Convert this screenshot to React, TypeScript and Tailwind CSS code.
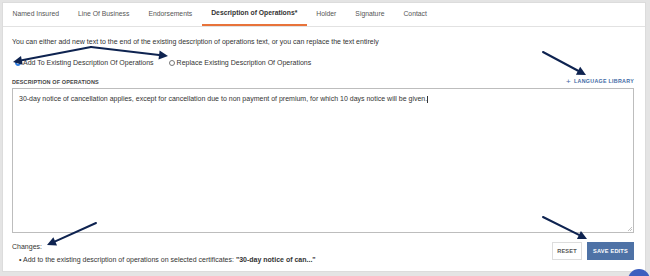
import React from "react";

const tabs = [
  "Named Insured",
  "Line Of Business",
  "Endorsements",
  "Description of Operations*",
  "Holder",
  "Signature",
  "Contact",
];

function Arrow({ x1, y1, x2, y2 }: { x1: number; y1: number; x2: number; y2: number }) {
  const a = Math.atan2(y2 - y1, x2 - x1);
  const len = 9;
  const w = 4.5;
  const bx = x2 - len * Math.cos(a);
  const by = y2 - len * Math.sin(a);
  const px = -Math.sin(a) * w;
  const py = Math.cos(a) * w;
  return (
    <g>
      <line x1={x1} y1={y1} x2={bx} y2={by} stroke="#0e2350" strokeWidth={2} strokeLinecap="round" />
      <polygon points={`${x2},${y2} ${bx + px},${by + py} ${bx - px},${by - py}`} fill="#0e2350" />
    </g>
  );
}

export default function App() {
  return (
    <div
      className="relative w-[650px] h-[276px] overflow-hidden bg-[#e4e4e4] pt-[2px] pl-[2px]"
      style={{ fontFamily: '"Liberation Sans", Arial, sans-serif' }}
    >
      <div className="w-[644px] h-[270px] bg-white border border-[#dcdcdc] text-[#333]">
        <div className="flex h-[24px] border-b border-[#e2e2e2] text-[6.8px] text-[#555]">
          {tabs.map((t, i) => (
            <div
              key={t}
              className={
                "flex items-center px-[9.5px] " +
                (i === 3
                  ? "font-bold text-[#333] border-b-2 border-[#e8733a]"
                  : "")
              }
            >
              {t}
            </div>
          ))}
        </div>
        <div className="pl-[9px] pr-[11px] pt-[10px]">
          <div className="text-[7px] text-[#333]">
            You can either add new text to the end of the existing description of operations text, or you can replace the text entirely
          </div>
          <div className="flex items-center mt-[10px] text-[7px] text-[#333]">
            <span className="w-[6px] h-[6px] rounded-full bg-[#2f7de1] border border-[#2f7de1] flex items-center justify-center mr-[2px] ml-[3px]">
              <span className="w-[2px] h-[2px] rounded-full bg-white" />
            </span>
            <span>Add To Existing Description Of Operations</span>
            <span className="w-[6px] h-[6px] rounded-full border border-[#777] bg-white ml-[15px] mr-[2px]" />
            <span>Replace Existing Description Of Operations</span>
          </div>
          <div className="flex items-center justify-between mt-[10px]">
            <span className="text-[5.5px] font-bold tracking-[0.1px] text-[#444]">DESCRIPTION OF OPERATIONS</span>
            <span className="text-[5.3px] font-bold tracking-[0.3px] text-[#3f6aa5] flex items-center gap-[3px]">
              <span className="text-[8px] font-normal leading-none">+</span>LANGUAGE LIBRARY
            </span>
          </div>
          <div className="mt-[2px] h-[145px] border border-[#bdbdbd] px-[6px] pt-[5px] text-[7px] text-[#333] relative">
            30-day notice of cancellation applies, except for cancellation due to non payment of premium, for which 10 days notice will be given.
            <span className="inline-block w-[0.5px] h-[7px] bg-[#333] align-middle" />
            <svg className="absolute right-[1px] bottom-[1px]" width="5" height="5" viewBox="0 0 5 5">
              <line x1="1" y1="5" x2="5" y2="1" stroke="#999" strokeWidth="0.6" />
              <line x1="3" y1="5" x2="5" y2="3" stroke="#999" strokeWidth="0.6" />
            </svg>
          </div>
          <div className="flex justify-between mt-[9px]">
            <div>
              <div className="text-[7px] text-[#333]">Changes:</div>
              <div className="mt-[2px] ml-[7px] text-[7px] text-[#333]">
                • Add to the existing description of operations on selected certificates:{" "}
                <span className="font-bold">"30-day notice of can..."</span>
              </div>
            </div>
            <div className="flex gap-[5px] h-[18px]">
              <div className="w-[30px] border border-[#ddd] flex items-center justify-center text-[5.6px] font-bold text-[#555] tracking-[0.2px]">
                RESET
              </div>
              <div className="w-[47px] bg-[#4e72a6] flex items-center justify-center text-[5.6px] font-bold text-white tracking-[0.2px]">
                SAVE EDITS
              </div>
            </div>
          </div>
        </div>
      </div>
      <div className="absolute left-[628px] top-[269px] w-[22px] h-[22px] rounded-full bg-[#3d5fbf]" />
      <svg className="absolute inset-0 pointer-events-none" width="650" height="276">
        <Arrow x1={91} y1={47} x2={13} y2={62} />
        <Arrow x1={91} y1={47} x2={168} y2={56} />
        <Arrow x1={543} y1={52} x2={586} y2={75} />
        <Arrow x1={96} y1={223} x2={47} y2={245} />
        <Arrow x1={543} y1={217} x2={587} y2={239} />
      </svg>
    </div>
  );
}
